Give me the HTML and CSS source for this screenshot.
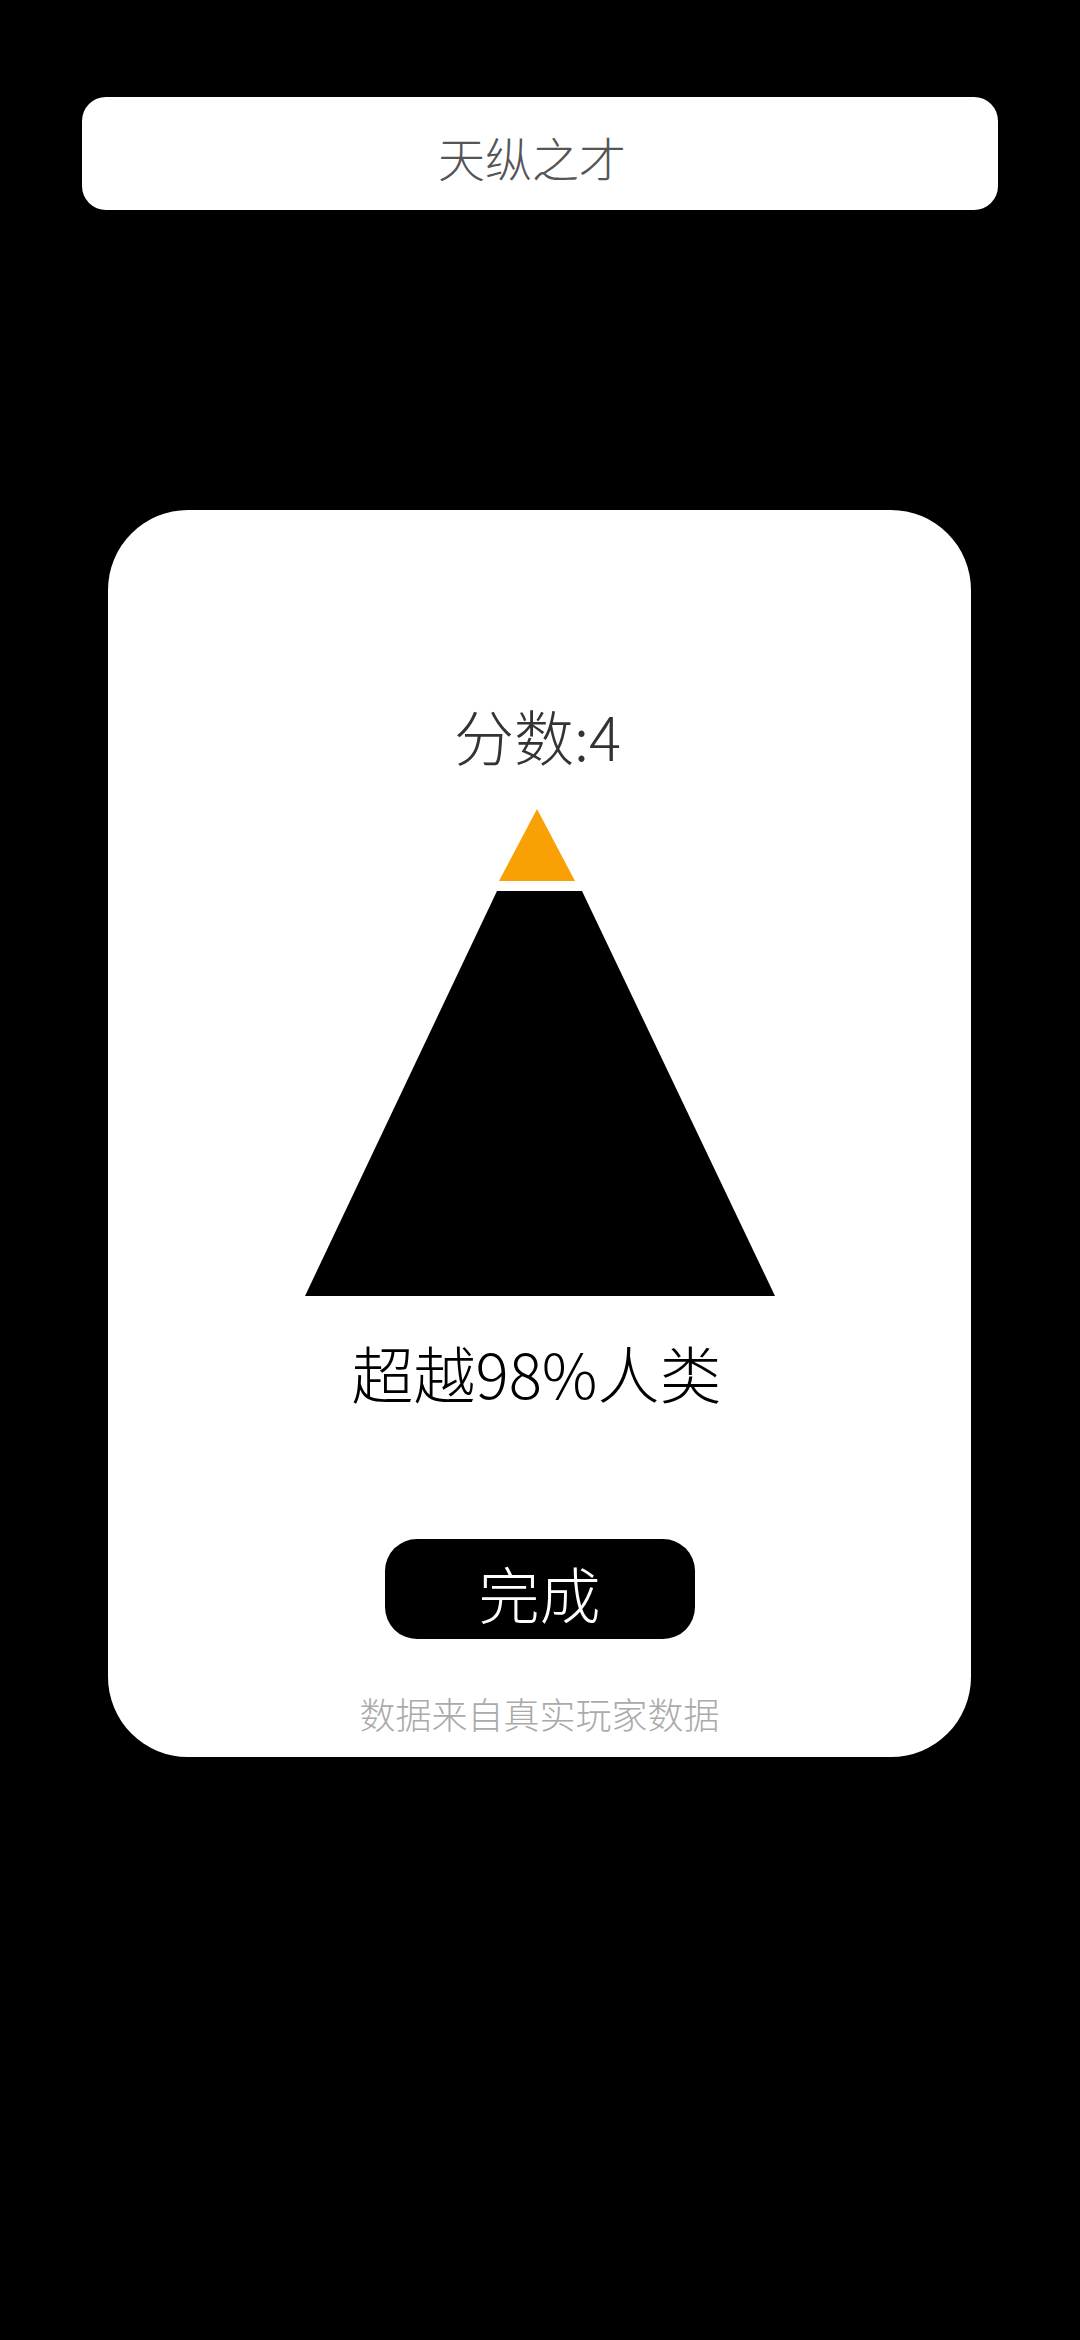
FILE: index.html
```html
<!DOCTYPE html>
<html lang="zh-CN">
<head>
<meta charset="utf-8">
<title>天纵之才</title>
<link rel="stylesheet" href="styles.css">
</head>
<body>
<div class="page">
  <header class="title-bar">
    <span class="title-text">天纵之才</span>
  </header>
  <section class="result-card">
    <div class="score">分数:4</div>
    <svg class="pyramid" viewBox="0 0 470 487" width="470" height="487" aria-hidden="true">
      <polygon class="tip" points="232,0 270,72 194,72"/>
      <polygon class="base" points="192,82 277,82 470,487 0,487"/>
    </svg>
    <div class="rank">超越98%人类</div>
    <button class="done-btn" type="button">完成</button>
    <div class="note">数据来自真实玩家数据</div>
  </section>
</div>
</body>
</html>
```

FILE: styles.css
```css
html, body {
  margin: 0;
  padding: 0;
  background: #000;
}

body {
  width: 1080px;
  height: 2340px;
  font-family: "Noto Sans CJK SC", "Noto Sans", sans-serif;
}

.page {
  display: flex;
  flex-direction: column;
  padding-top: 97px;
}

.title-bar {
  margin-left: 82px;
  width: 916px;
  height: 113px;
  box-sizing: border-box;
  padding: 6px 16px 0 0;
  background: #fff;
  border-radius: 24px;
  display: flex;
  align-items: center;
  justify-content: center;
}

.title-text {
  font-size: 47px;
  line-height: 1;
  font-weight: 300;
  color: #555;
}

.result-card {
  margin-top: 300px;
  margin-left: 108px;
  width: 863px;
  box-sizing: border-box;
  background: #fff;
  border-radius: 80px;
  padding: 195px 0 26px;
  display: flex;
  flex-direction: column;
  align-items: center;
}

.score {
  font-size: 60px;
  line-height: 1;
  font-weight: 300;
  color: #333;
  padding-right: 4px;
}

.pyramid {
  display: block;
  flex: none;
  margin-top: 44px;
}

.pyramid .tip {
  fill: #f9a005;
}

.pyramid .base {
  fill: #000;
}

.rank {
  margin-top: 45px;
  font-size: 62px;
  line-height: 1;
  font-weight: 300;
  color: #000;
  padding-right: 6px;
}

.done-btn {
  margin-top: 136px;
  width: 310px;
  height: 100px;
  border: none;
  border-radius: 32px;
  background: #000;
  color: #fff;
  font-family: inherit;
  font-size: 61px;
  line-height: 1;
  font-weight: 300;
  padding: 6px 0 0;
  display: flex;
  align-items: center;
  justify-content: center;
}

.note {
  margin-top: 56px;
  font-size: 36px;
  line-height: 1;
  font-weight: 300;
  color: #aaa;
}
```
